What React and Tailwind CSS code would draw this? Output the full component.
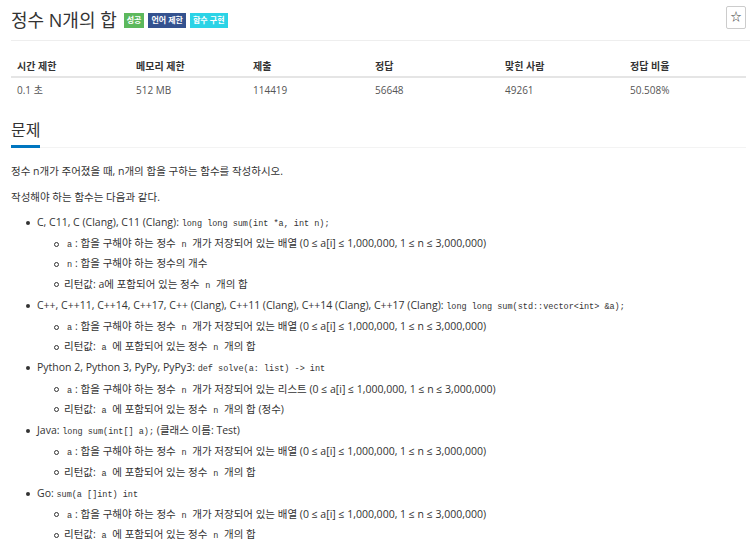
import { useState } from "react";

const stats = [
  { label: "시간 제한", value: "0.1 초", w: "w-[119px]" },
  { label: "메모리 제한", value: "512 MB", w: "w-[117px]" },
  { label: "제출", value: "114419", w: "w-[122px]" },
  { label: "정답", value: "56648", w: "w-[130px]" },
  { label: "맞힌 사람", value: "49261", w: "w-[125px]" },
  { label: "정답 비율", value: "50.508%", w: "flex-1" },
];

function Code({ children, pad = true }) {
  return (
    <code className={`font-['Liberation_Mono',monospace] text-[8.5px] text-[#333] ${pad ? "px-[3px]" : ""}`}>
      {children}
    </code>
  );
}

function Sub({ children }) {
  return (
    <li className="flex items-center h-[20.3px]">
      <span className="w-[5px] h-[5px] rounded-full border border-[#333] mr-[5px] shrink-0" />
      <span>{children}</span>
    </li>
  );
}

function Item({ head, children }) {
  return (
    <li>
      <div className="flex items-center h-[22px]">
        <span className="w-[4px] h-[4px] rounded-full bg-[#333] ml-[26px] mr-[7px] shrink-0" />
        <span>{head}</span>
      </div>
      <ul className="pl-[54px]">{children}</ul>
    </li>
  );
}

export default function App() {
  const [starred, setStarred] = useState(false);

  return (
    <div className="w-[750px] h-[558px] overflow-hidden bg-white text-[#333] font-['Open_Sans','Noto_Sans_CJK_KR',sans-serif] text-[12px]">
      {/* Title */}
      <div className="flex items-center h-[41px] ml-[11px] border-b border-[#eee] pr-[4px]">
        <h1 className="text-[18px] leading-none text-[#333] mr-[7px]">정수 N개의 합</h1>
        <span className="bg-[#5cb85c] text-white text-[8px] font-bold px-[3px] h-[15px] flex items-center mr-[4px]">성공</span>
        <span className="bg-[#34528f] text-white text-[8px] font-bold px-[3px] h-[15px] flex items-center mr-[4px]">언어 제한</span>
        <span className="bg-[#2bd3e6] text-white text-[8px] font-bold px-[3px] h-[15px] flex items-center">함수 구현</span>
        <button
          onClick={() => setStarred(!starred)}
          className="ml-auto w-[20px] h-[23px] mb-[6px] border border-[#ccc] rounded-[2px] flex items-center justify-center text-[11px] text-[#333]"
        >
          {starred ? "★" : "☆"}
        </button>
      </div>

      {/* Stats table */}
      <div className="ml-[11px] mr-[4px] mt-[15px]">
        <div className="flex h-[22px] items-center border-b-2 border-[#e5e5e5] text-[10px] font-bold">
          {stats.map((s) => (
            <div key={s.label} className={`${s.w} pl-[6px]`}>{s.label}</div>
          ))}
        </div>
        <div className="flex h-[24px] items-center text-[10px] text-[#555]">
          {stats.map((s) => (
            <div key={s.label} className={`${s.w} pl-[6px]`}>{s.value}</div>
          ))}
        </div>
      </div>

      {/* Section heading */}
      <div className="ml-[11px] mr-[4px] mt-[17px] flex border-b border-[#f3f3f3]">
        <div className="border-b-[3px] border-[#0076c0] pb-[4px] -mb-px">
          <h2 className="text-[16px] leading-[22px] text-[#333]">문제</h2>
        </div>
      </div>

      {/* Body */}
      <div className="ml-[11px] mt-[13px] text-[10.5px] leading-[20px]">
        <p className="mb-[6px]">정수 n개가 주어졌을 때, n개의 합을 구하는 함수를 작성하시오.</p>
        <p className="mb-[5px]">작성해야 하는 함수는 다음과 같다.</p>
        <ul className="-ml-[11px]">
          <Item head={<>C, C11, C (Clang), C11 (Clang): <Code pad={false}>long long sum(int *a, int n);</Code></>}>
            <Sub><Code>a</Code>: 합을 구해야 하는 정수 <Code>n</Code> 개가 저장되어 있는 배열 (0 ≤ a[i] ≤ 1,000,000, 1 ≤ n ≤ 3,000,000)</Sub>
            <Sub><Code>n</Code>: 합을 구해야 하는 정수의 개수</Sub>
            <Sub>리턴값: a에 포함되어 있는 정수 <Code>n</Code> 개의 합</Sub>
          </Item>
          <Item head={<>C++, C++11, C++14, C++17, C++ (Clang), C++11 (Clang), C++14 (Clang), C++17 (Clang): <Code pad={false}>long long sum(std::vector&lt;int&gt; &amp;a);</Code></>}>
            <Sub><Code>a</Code>: 합을 구해야 하는 정수 <Code>n</Code> 개가 저장되어 있는 배열 (0 ≤ a[i] ≤ 1,000,000, 1 ≤ n ≤ 3,000,000)</Sub>
            <Sub>리턴값: <Code>a</Code> 에 포함되어 있는 정수 <Code>n</Code> 개의 합</Sub>
          </Item>
          <Item head={<>Python 2, Python 3, PyPy, PyPy3: <Code pad={false}>def solve(a: list) -&gt; int</Code></>}>
            <Sub><Code>a</Code>: 합을 구해야 하는 정수 <Code>n</Code> 개가 저장되어 있는 리스트 (0 ≤ a[i] ≤ 1,000,000, 1 ≤ n ≤ 3,000,000)</Sub>
            <Sub>리턴값: <Code>a</Code> 에 포함되어 있는 정수 <Code>n</Code> 개의 합 (정수)</Sub>
          </Item>
          <Item head={<>Java: <Code pad={false}>long sum(int[] a);</Code> (클래스 이름: Test)</>}>
            <Sub><Code>a</Code>: 합을 구해야 하는 정수 <Code>n</Code> 개가 저장되어 있는 배열 (0 ≤ a[i] ≤ 1,000,000, 1 ≤ n ≤ 3,000,000)</Sub>
            <Sub>리턴값: <Code>a</Code> 에 포함되어 있는 정수 <Code>n</Code> 개의 합</Sub>
          </Item>
          <Item head={<>Go: <Code pad={false}>sum(a []int) int</Code></>}>
            <Sub><Code>a</Code>: 합을 구해야 하는 정수 <Code>n</Code> 개가 저장되어 있는 배열 (0 ≤ a[i] ≤ 1,000,000, 1 ≤ n ≤ 3,000,000)</Sub>
            <Sub>리턴값: <Code>a</Code> 에 포함되어 있는 정수 <Code>n</Code> 개의 합</Sub>
          </Item>
        </ul>
      </div>
    </div>
  );
}
